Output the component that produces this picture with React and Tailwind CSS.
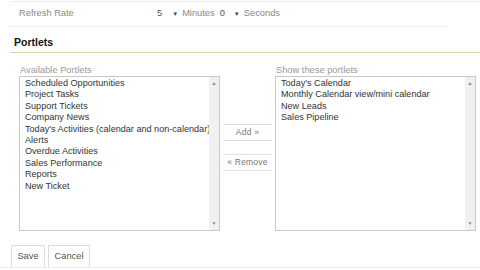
const available = [
  "Scheduled Opportunities",
  "Project Tasks",
  "Support Tickets",
  "Company News",
  "Today's Activities (calendar and non-calendar)",
  "Alerts",
  "Overdue Activities",
  "Sales Performance",
  "Reports",
  "New Ticket",
];

const shown = [
  "Today's Calendar",
  "Monthly Calendar view/mini calendar",
  "New Leads",
  "Sales Pipeline",
];

const ListBox = ({ items }) => (
  <div className="flex h-[155px] border border-[#c8c8c8] bg-white">
    <ul className="flex-1 overflow-hidden whitespace-nowrap pl-[5px] pt-[1px] text-[9.1px] leading-[11.4px] text-[#333]">
      {items.map((item) => (
        <li key={item}>{item}</li>
      ))}
    </ul>
    <div className="flex w-[10px] flex-col justify-between bg-[#f0f0f0] py-[4px] text-center text-[5px] leading-[5px] text-[#888]">
      <span>▲</span>
      <span>▼</span>
    </div>
  </div>
);

export default function App() {
  return (
    <div className="h-[270px] w-[480px] overflow-hidden bg-white font-['Liberation_Sans',Arial,sans-serif]">
      <div className="ml-[10px] h-[2px] border-b border-[#eee]" />
      <div className="ml-[10px] mr-[33px] flex h-[25px] items-center border-b border-[#f0f0f0] text-[9.3px] text-[#888]">
        <span className="ml-[9px] w-[138px]">Refresh Rate</span>
        <span className="text-[#555]">5</span>
        <span className="ml-[10px] text-[6px] text-[#444]">▼</span>
        <span className="ml-[4px]">Minutes</span>
        <span className="ml-[5px] text-[#555]">0</span>
        <span className="ml-[9px] text-[6px] text-[#444]">▼</span>
        <span className="ml-[4px]">Seconds</span>
      </div>

      <h2 className="ml-[10px] mt-[9px] border-b border-[#d8d4a4] pb-[3px] pl-[4px] text-[10.5px] font-bold leading-[13px] text-[#111]">
        Portlets
      </h2>

      <div className="mt-[12px] flex pl-[19px]">
        <div className="w-[201px]">
          <div className="mb-[1px] pl-[1px] text-[9.3px] leading-[10px] text-[#999]">Available Portlets</div>
          <ListBox items={available} />
        </div>

        <div className="mx-[3px] flex w-[49px] flex-col gap-[13px] pt-[59px]">
          <button className="h-[17px] border-t border-b border-[#e2e2e2] bg-white text-[8.5px] tracking-wide text-[#777]">Add »</button>
          <button className="h-[17px] border-t border-b border-[#e2e2e2] bg-white text-[8.5px] tracking-wide text-[#777]">« Remove</button>
        </div>

        <div className="w-[201px]">
          <div className="mb-[1px] pl-[1px] text-[9.3px] leading-[10px] text-[#999]">Show these portlets</div>
          <ListBox items={shown} />
        </div>
      </div>

      <div className="mt-[14px] flex gap-[3px] border-b border-[#eee] pl-[11px]">
        <button className="h-[22px] w-[34px] border border-b-0 border-[#ddd] bg-white text-[9.3px] text-[#555]">Save</button>
        <button className="h-[22px] w-[42px] border border-b-0 border-[#ddd] bg-white text-[9.3px] text-[#555]">Cancel</button>
      </div>
    </div>
  );
}
